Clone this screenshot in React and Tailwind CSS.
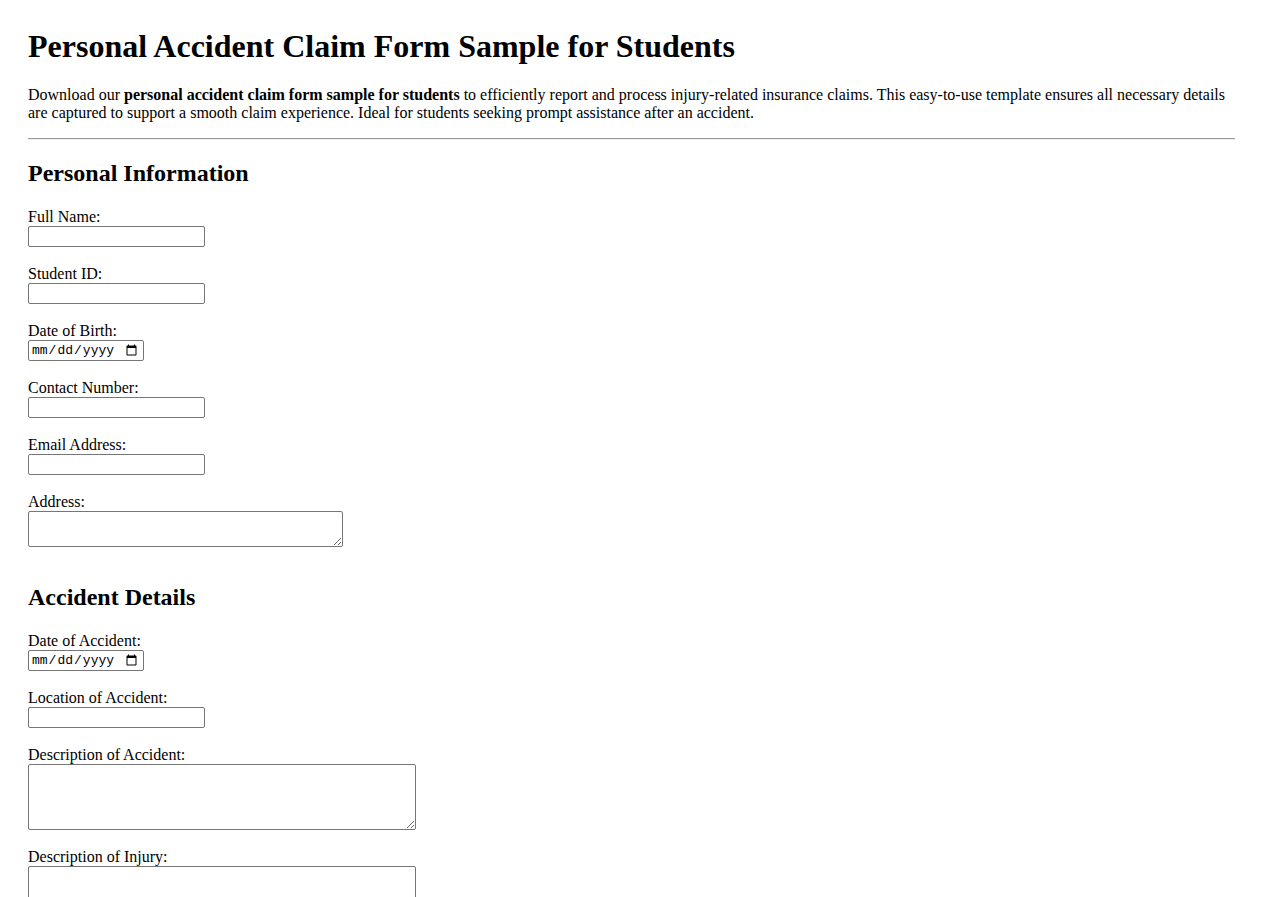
import { useState } from "react";

const Field = ({ label, type = "text", area, w, h }) => {
  const [val, setVal] = useState("");
  return (
    <div className="mb-[17px]">
      <label className="block leading-[19px]">{label}</label>
      {area ? (
        <textarea
          value={val}
          onChange={(e) => setVal(e.target.value)}
          className={`block ${w} ${h} border border-[#767676] rounded-[2px] bg-white px-[2px] py-[1px] text-[13px] font-['Liberation_Mono',monospace] outline-none`}
        />
      ) : type === "date" ? (
        <input
          type="date"
          value={val}
          onChange={(e) => setVal(e.target.value)}
          className="block w-[116px] h-[21px] border border-[#767676] rounded-[2px] bg-white pl-[2px] pr-[3px] text-[13px] font-['Liberation_Mono',monospace] outline-none"
        />
      ) : (
        <input
          type={type}
          value={val}
          onChange={(e) => setVal(e.target.value)}
          className="block w-[177px] h-[21px] border border-[#767676] rounded-[2px] bg-white px-[2px] text-[13px] font-['Liberation_Sans',sans-serif] outline-none"
        />
      )}
    </div>
  );
};

const App = () => {
  return (
    <div className="px-[28px] pt-[28px] font-['Liberation_Serif',serif] text-[16px] text-black bg-white">
      {/* title + intro */}
      <h1 className="text-[32px] font-bold leading-[37px]">
        Personal Accident Claim Form Sample for Students
      </h1>
      <p className="mt-[21px] leading-[18px]">
        Download our <b>personal accident claim form sample for students</b> to
        efficiently report and process injury-related insurance claims. This
        easy-to-use template ensures all necessary details are captured to
        support a smooth claim experience. Ideal for students seeking prompt
        assistance after an accident.
      </p>
      <hr className="mt-[16px] border-0 border-t-[1px] border-t-[#9a9a9a] border-b-[1px] border-b-[#eeeeee]" />

      {/* personal info */}
      <h2 className="mt-[19px] mb-[20px] text-[24px] font-bold leading-[28px]">
        Personal Information
      </h2>
      <Field label="Full Name:" />
      <Field label="Student ID:" />
      <Field label="Date of Birth:" type="date" />
      <Field label="Contact Number:" type="tel" />
      <Field label="Email Address:" type="email" />
      <Field label="Address:" area w="w-[315px]" h="h-[36px]" />

      {/* accident */}
      <h2 className="mt-[36px] mb-[20px] text-[24px] font-bold leading-[28px]">
        Accident Details
      </h2>
      <Field label="Date of Accident:" type="date" />
      <Field label="Location of Accident:" />
      <Field label="Description of Accident:" area w="w-[388px]" h="h-[66px]" />
      <Field label="Description of Injury:" area w="w-[388px]" h="h-[66px]" />
    </div>
  );
};

export default App;
